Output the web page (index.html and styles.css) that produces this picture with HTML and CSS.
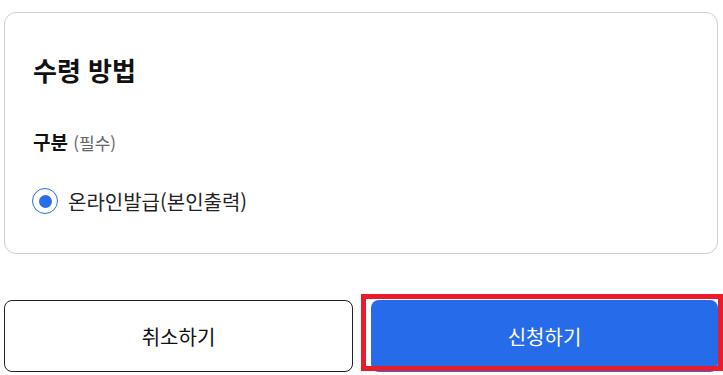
FILE: index.html
```html
<!DOCTYPE html>
<html lang="ko">
<head>
<meta charset="utf-8">
<link rel="stylesheet" href="styles.css">
</head>
<body>
<div class="page">
  <section class="card">
    <h2 class="title">수령 방법</h2>
    <div class="field-label">구분 <span class="req">(필수)</span></div>
    <label class="radio-row">
      <span class="radio"><span class="dot"></span></span>
      <span class="radio-text">온라인발급(본인출력)</span>
    </label>
  </section>
  <div class="actions">
    <button class="btn btn-cancel">취소하기</button>
    <div class="submit-wrap">
      <button class="btn btn-submit">신청하기</button>
    </div>
  </div>
</div>
</body>
</html>
```

FILE: styles.css
```css
html, body {
  margin: 0;
  padding: 0;
  background: #fff;
}
body {
  font-family: "Noto Sans CJK KR", "Noto Sans", sans-serif;
  color: #111;
}
.page {
  width: 714px;
  padding: 12px 5px 0 4px;
  display: flex;
  flex-direction: column;
}
.card {
  border: 1px solid #cfcfcf;
  border-radius: 12px;
  padding: 40px 28px 40px 28px;
  height: 242px;
  box-sizing: border-box;
  display: flex;
  flex-direction: column;
}
.title {
  margin: 0;
  font-size: 26px;
  line-height: 34px;
  font-weight: 700;
  color: #111;
}
.field-label {
  margin-top: 42px;
  font-size: 19px;
  line-height: 26px;
  font-weight: 700;
  color: #111;
}
.req {
  font-size: 17px;
  font-weight: 400;
  color: #666;
}
.radio-row {
  margin-top: 32px;
  display: flex;
  align-items: center;
  height: 26px;
}
.radio {
  width: 26px;
  height: 26px;
  margin-left: -1px;
  box-sizing: border-box;
  border: 1.5px solid #2a6de9;
  border-radius: 50%;
  display: flex;
  align-items: center;
  justify-content: center;
}
.dot {
  width: 13px;
  height: 13px;
  border-radius: 50%;
  background: #2a6de9;
}
.radio-text {
  margin-left: 10px;
  font-size: 20px;
  color: #222;
}
.actions {
  margin-top: 46px;
  display: flex;
  gap: 18px;
}
.btn {
  font-family: "Noto Sans CJK KR", "Noto Sans", sans-serif;
  font-size: 20px;
  height: 72px;
  padding: 0;
  box-sizing: border-box;
  border-radius: 8px;
  cursor: pointer;
}
.btn-cancel {
  flex: 1 1 0;
  min-width: 0;
  background: #fff;
  border: 1px solid #222;
  color: #111;
}
.submit-wrap {
  flex: 1 1 0;
  min-width: 0;
  position: relative;
  display: flex;
}
.btn-submit {
  flex: 1;
  background: #266bea;
  border: none;
  color: #fff;
}
.submit-wrap::after {
  content: "";
  position: absolute;
  top: -6px;
  left: -10px;
  right: -5px;
  bottom: 1px;
  border: 5px solid #e81c2b;
  pointer-events: none;
}
```
